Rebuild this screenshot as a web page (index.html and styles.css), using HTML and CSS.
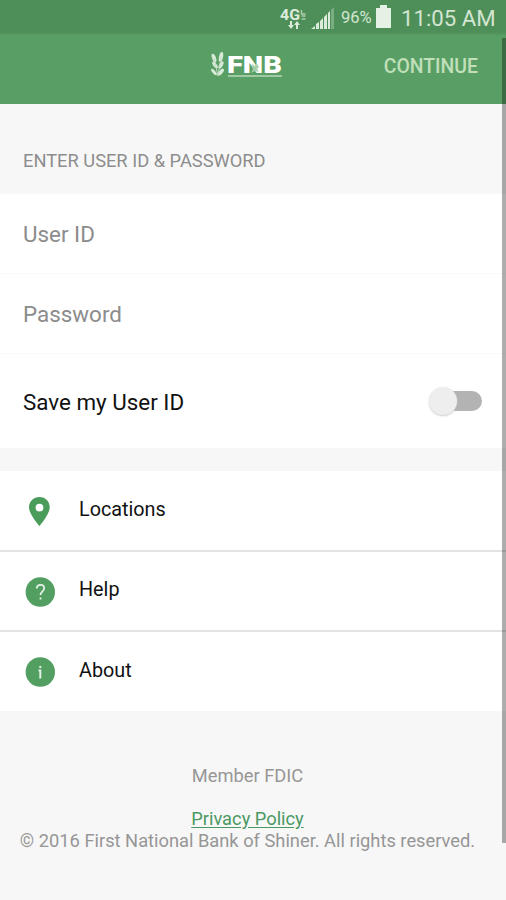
FILE: index.html
```html
<!DOCTYPE html>
<html lang="en">
<head>
<meta charset="utf-8">
<title>FNB</title>
<link rel="stylesheet" href="styles.css">
</head>
<body>
<div class="status">
  <svg class="lte" width="27" height="24" viewBox="0 0 27 24">
    <text class="lte-label" x="0" y="14" textLength="20" lengthAdjust="spacingAndGlyphs">4G</text>
    <path d="M21.500 4v4h4M21.500 10h4M21.500 13h4" fill="none" stroke="#a9cdac" stroke-width="1.500"/>
    <path d="M10 15h2v4h2l-3 4-3-4h2zM16 23v-4h-2l3-4 3 4h-2v4z" fill="#dcebdc"/>
  </svg>
  <svg class="signal" width="24" height="22" viewBox="0 0 24 22">
    <path d="M0 22h4v-3zM5 22h3v-7l-3 2zM9 22h3V11l-3 3zM13 22h3V7l-3 3z" fill="#dcebdc"/>
    <path d="M17 22h2V4l-2 2z" fill="#dcebdc"/><path d="M20 22h3V0l-3 3z" fill="#79ae80"/>
  </svg>
  <span class="percent">96%</span>
  <svg class="battery" width="15" height="23" viewBox="0 0 15 23"><path d="M4 0h7v3h4v20H0V3h4z" fill="#e5f1e4"/></svg>
  <span class="clock">11:05 AM</span>
</div>
<header class="bar">
  <svg class="logo" width="74" height="30" viewBox="0 0 74 30">
    <g fill="#d9ead9">
      <ellipse cx="4" cy="7" rx="1.900" ry="4.500" transform="rotate(-20 4 7)"/>
      <ellipse cx="11" cy="6" rx="2" ry="5" transform="rotate(12 11 6)"/>
      <ellipse cx="5" cy="14" rx="1.800" ry="4" transform="rotate(-35 5 14)"/>
      <ellipse cx="11" cy="14" rx="1.800" ry="4" transform="rotate(30 11 14)"/>
      <ellipse cx="4" cy="21" rx="1.500" ry="4" transform="rotate(-40 4 21)"/>
      <ellipse cx="11" cy="21" rx="1.800" ry="4" transform="rotate(40 11 21)"/>
    </g>
    <path d="M4 7l4 18M11 6L8 25" stroke="#c2dec3" fill="none"/>
    <text class="logo-name" x="17" y="21.500" textLength="55" lengthAdjust="spacingAndGlyphs">FNB</text>
    <path d="M42 13l3 2 2-2 2 3-2 2 2 3-4-1-4 2 2-4z" fill="#a5cfa9"/>
    <path d="M18 25h54" stroke="#b9d9bb" stroke-width="1.500"/>
  </svg>
  <span class="continue">CONTINUE</span>
</header>
<main>
  <h1 class="heading"><span>ENTER USER ID &amp; PASSWORD</span></h1>
  <section class="form">
    <div class="field"><span class="user">User ID</span></div>
    <div class="field"><span class="pass">Password</span></div>
    <div class="save"><span class="save-label">Save my User ID</span><span class="switch"><i class="knob"></i></span></div>
  </section>
  <nav class="menu">
    <div class="item">
      <svg class="icon" width="30" height="30" viewBox="0 0 30 30"><path fill="#499c59" fill-rule="evenodd" d="M14.500 1C8.500 1 4 5.500 4 11.300 4 18.500 14.500 30 14.500 30S24.700 18.500 24.700 11.300C24.700 5.500 20.500 1 14.500 1zm0 6.800a3.900 3.900 0 1 1 0 7.800 3.900 3.900 0 0 1 0-7.800z"/></svg>
      <span class="loc">Locations</span>
    </div>
    <div class="item">
      <svg class="icon" width="30" height="30" viewBox="0 0 30 30"><circle cx="15.300" cy="15" r="14.700" fill="#529f61"/><path d="M11.800 11.500c0-5 7.400-4.700 7.400-.3 0 3-3.700 3.400-3.700 6.800M15.500 20.400v2.200" fill="none" stroke="#e4f1e6" stroke-width="1.800"/></svg>
      <span class="help">Help</span>
    </div>
    <div class="item">
      <svg class="icon" width="30" height="30" viewBox="0 0 30 30"><circle cx="15.300" cy="15" r="14.700" fill="#529f61"/><path d="M15.300 9v2M13.500 13.500h1.800v8" fill="none" stroke="#e4f1e6" stroke-width="2"/></svg>
      <span class="about">About</span>
    </div>
  </nav>
</main>
<footer class="footer">
  <span class="member">Member FDIC</span>
  <a class="policy">Privacy Policy</a>
  <span class="copy">© 2016 First National Bank of Shiner. All rights reserved.</span>
</footer>
<div class="scroll"></div>
</body>
</html>
```
FILE: styles.css
```css
* { box-sizing: border-box; }
body { margin: 0; width: 506px; height: 900px; overflow: hidden; position: relative; background: #f7f7f7; font-family: Roboto, "Liberation Sans", sans-serif; color: #111; }
span, a { white-space: nowrap; }
.status { height: 35px; display: flex; align-items: center; padding-left: 280px; background: linear-gradient(#4e8e59 32px, #579a62 35px); color: #d3e6d1; }
.lte { margin-top: 0; }
.lte-label { font: 700 14px Roboto, sans-serif; fill: #dcebdc; }
.signal { margin-left: 4px; margin-top: 0; }
.percent { width: 35px; margin-left: 6px; font-size: 16.5px; }
.battery { margin-top: -2px; }
.clock { margin-left: 10px; font-size: 22.2px; margin-top: 1px; }
.bar { height: 69px; display: flex; align-items: center; justify-content: space-between; padding: 0 28px 7px 210px; background: #599f65; }
.logo-name { font: 900 23px Roboto, sans-serif; fill: #fff; }
.continue { font-size: 19.4px; font-weight: 500; color: #c0dfba; }
.heading { height: 90px; margin: 0; padding: 45px 23px 0; font-size: 18.3px; font-weight: 400; line-height: 24px; color: #8d8d8d; }
.form { height: 254px; background: #fff; }
.field { height: 80px; display: flex; align-items: center; padding: 0 23px; font-size: 22.4px; color: #8c8c8c; border-bottom: 1px solid #fafafa; }
.save { height: 94px; display: flex; align-items: center; justify-content: space-between; padding: 2px 24px 0 23px; font-size: 22.4px; }
.switch { width: 46px; height: 20px; border-radius: 10px; background: #b3b3b3; position: relative; margin-top: -3px; }
.knob { position: absolute; left: -7px; top: -4px; width: 28px; height: 28px; border-radius: 50%; background: #eee; box-shadow: 0 1px 2px #ccc; }
.menu { margin-top: 23px; background: #fff; }
.item { height: 80px; display: flex; align-items: center; padding: 1px 25px 0; font-size: 19.8px; border-bottom: 2px solid #e4e4e4; }
.item:first-child { height: 81px; }
.item:last-child { height: 79px; border-bottom: 0; }
.icon { margin-right: 24px; }
.item span { margin-top: -4px; }
.footer { height: 189px; padding-top: 54px; display: flex; flex-direction: column; align-items: center; font-size: 18.3px; line-height: 22px; color: #969696; padding-right: 11px; }
.policy { margin-top: 21px; color: #4b9962; text-decoration: underline; text-underline-offset: 2px; }
.scroll { position: absolute; left: 502px; top: 38px; width: 4px; height: 805px; background: rgba(0,0,0,.32); }
```
